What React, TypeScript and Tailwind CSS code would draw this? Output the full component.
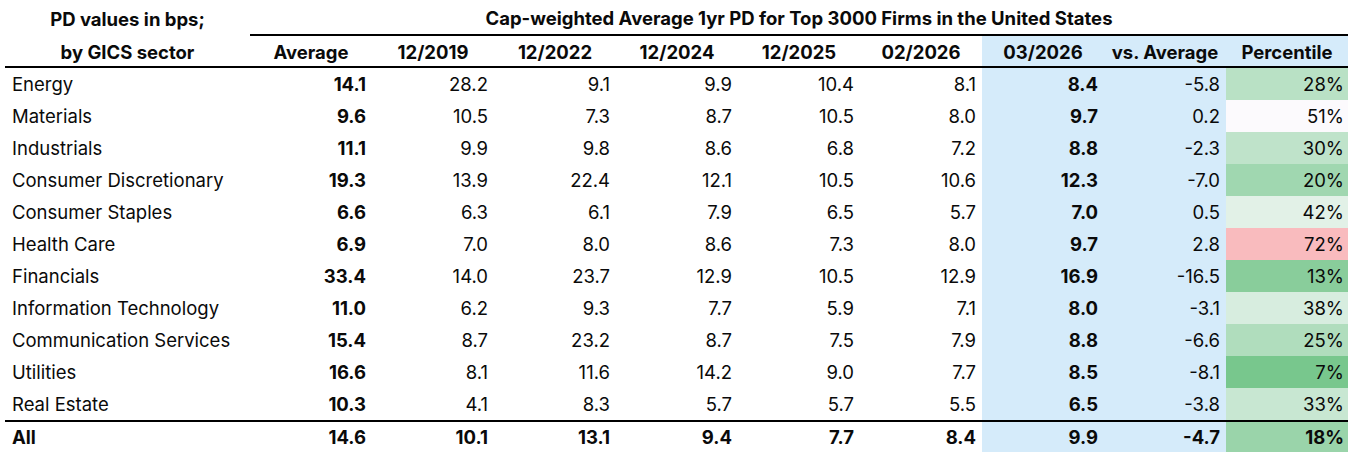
import React from "react";

type Row = {
  name: string;
  vals: string[]; // avg, 12/2019, 12/2022, 12/2024, 12/2025, 02/2026, 03/2026, vs avg
  pct: string;
  bg: string;
};

const cols = ["Average", "12/2019", "12/2022", "12/2024", "12/2025", "02/2026", "03/2026", "vs. Average", "Percentile"];

const rows: Row[] = [
  { name: "Energy", vals: ["14.1", "28.2", "9.1", "9.9", "10.4", "8.1", "8.4", "-5.8"], pct: "28%", bg: "bg-[#B9E1C5]" },
  { name: "Materials", vals: ["9.6", "10.5", "7.3", "8.7", "10.5", "8.0", "9.7", "0.2"], pct: "51%", bg: "bg-[#FCFAFD]" },
  { name: "Industrials", vals: ["11.1", "9.9", "9.8", "8.6", "6.8", "7.2", "8.8", "-2.3"], pct: "30%", bg: "bg-[#BFE3CA]" },
  { name: "Consumer Discretionary", vals: ["19.3", "13.9", "22.4", "12.1", "10.5", "10.6", "12.3", "-7.0"], pct: "20%", bg: "bg-[#A0D7B0]" },
  { name: "Consumer Staples", vals: ["6.6", "6.3", "6.1", "7.9", "6.5", "5.7", "7.0", "0.5"], pct: "42%", bg: "bg-[#E2F1E7]" },
  { name: "Health Care", vals: ["6.9", "7.0", "8.0", "8.6", "7.3", "8.0", "9.7", "2.8"], pct: "72%", bg: "bg-[#F9BBBE]" },
  { name: "Financials", vals: ["33.4", "14.0", "23.7", "12.9", "10.5", "12.9", "16.9", "-16.5"], pct: "13%", bg: "bg-[#89CD9B]" },
  { name: "Information Technology", vals: ["11.0", "6.2", "9.3", "7.7", "5.9", "7.1", "8.0", "-3.1"], pct: "38%", bg: "bg-[#D7EDDF]" },
  { name: "Communication Services", vals: ["15.4", "8.7", "23.2", "8.7", "7.5", "7.9", "8.8", "-6.6"], pct: "25%", bg: "bg-[#B0DDBD]" },
  { name: "Utilities", vals: ["16.6", "8.1", "11.6", "14.2", "9.0", "7.7", "8.5", "-8.1"], pct: "7%", bg: "bg-[#78C78D]" },
  { name: "Real Estate", vals: ["10.3", "4.1", "8.3", "5.7", "5.7", "5.5", "6.5", "-3.8"], pct: "33%", bg: "bg-[#C8E7D2]" },
];

const total: Row = { name: "All", vals: ["14.6", "10.1", "13.1", "9.4", "7.7", "8.4", "9.9", "-4.7"], pct: "18%", bg: "bg-[#9AD4AA]" };

const grid = "grid grid-cols-[245px_repeat(9,122px)]";

function DataRow({ r, last, bold, line }: { r: Row; last?: boolean; bold?: boolean; line?: boolean }) {
  const h = line ? "h-[34px] border-b-2 border-black" : last ? "h-[30px]" : "h-[32px]";
  return (
    <div className={`${grid}`}>
      <div className={`${h} flex items-center pt-[2px] pl-[7px] ${bold ? "font-bold" : ""}`}>{r.name}</div>
      {r.vals.map((v, i) => (
        <div
          key={i}
          className={`${h} flex items-center justify-end pt-[2px] pr-[6px] ${i === 0 || i === 6 || bold ? "font-bold" : ""} ${i >= 6 ? "bg-[#D5EBFA]" : ""}`}
        >
          {v}
        </div>
      ))}
      <div className={`${h} ${r.bg} flex items-center justify-end pt-[2px] pr-[4px] ${bold ? "font-bold" : ""}`}>{r.pct}</div>
    </div>
  );
}

export default function App() {
  return (
    <div className="w-[1356px] h-[452px] bg-white text-[#0a0a0a] font-['Inter',sans-serif] text-[18.5px] overflow-hidden">
      <div className="ml-[5px]">
        {/* title row */}
        <div className={grid}>
          <div className="h-[36px] flex items-end justify-center pb-[2px] font-bold">PD values in bps;</div>
          <div className="col-span-9 h-[36px] border-b-2 border-black flex items-end justify-center pb-[1px] font-bold">
            Cap-weighted Average 1yr PD for Top 3000 Firms in the United States
          </div>
        </div>
        {/* header row */}
        <div className={grid}>
          <div className="h-[32px] border-b-2 border-black flex items-center justify-center pt-[3px] font-bold">by GICS sector</div>
          {cols.map((c, i) => (
            <div
              key={c}
              className={`h-[32px] border-b-2 border-black flex items-center justify-center pt-[3px] font-bold ${i >= 6 ? "bg-[#D5EBFA]" : ""}`}
            >
              {c}
            </div>
          ))}
        </div>
        {rows.map((r, i) => (
          <DataRow key={r.name} r={r} line={i === rows.length - 1} />
        ))}
        <DataRow r={total} last bold />
      </div>
    </div>
  );
}
